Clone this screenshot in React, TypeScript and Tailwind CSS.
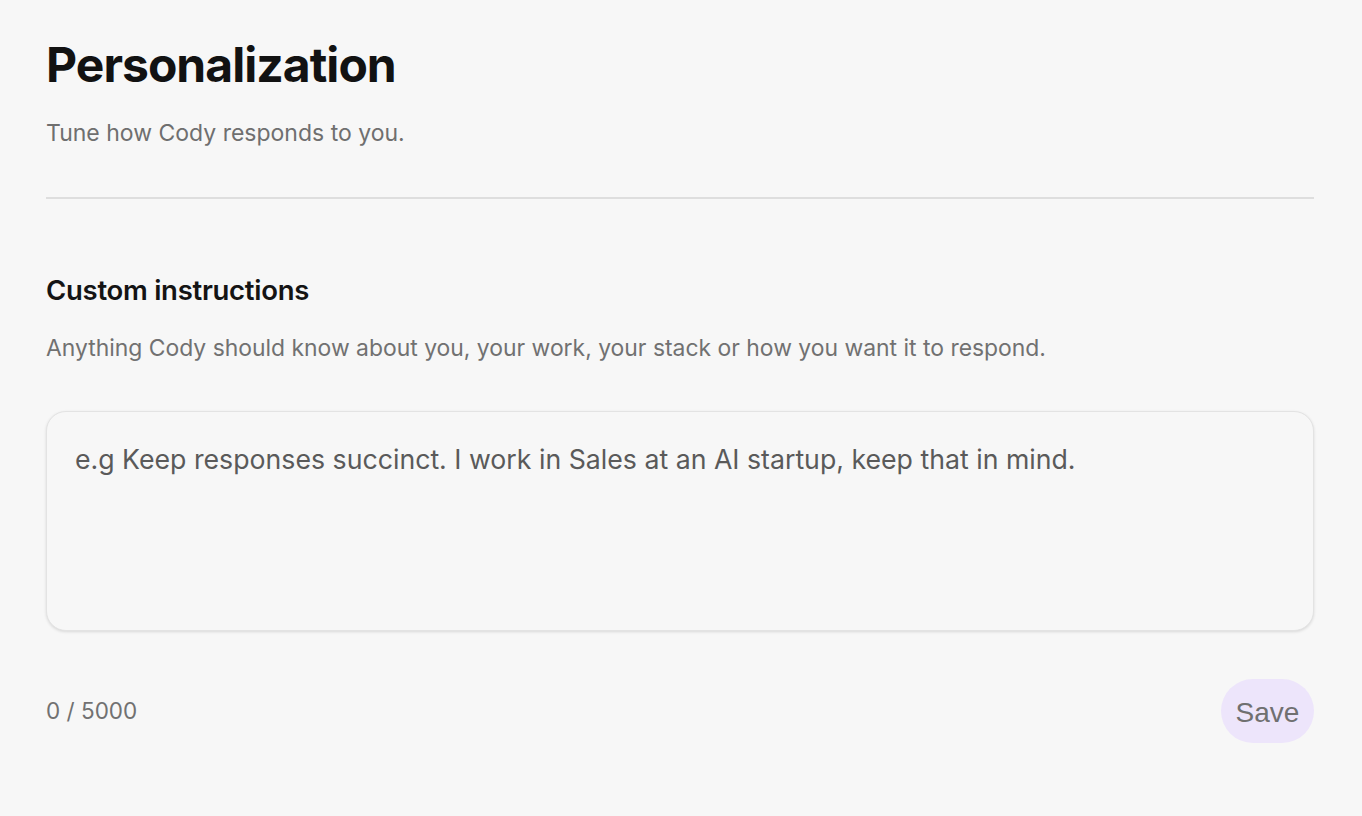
import React from "react";

export default function App() {
  return (
    <div
      className="min-h-[816px] w-full bg-[#f7f7f7] pl-[46px] pr-[48px] pt-[36px]"
      style={{ fontFamily: "Inter, 'Noto Sans', sans-serif" }}
    >
      <h1 className="text-[48px] font-bold leading-[58px] tracking-[-0.02em] text-[#121212]">
        Personalization
      </h1>
      <p className="mt-[24px] text-[23px] leading-[30px] text-[#6f6f6f]">
        Tune how Cody responds to you.
      </p>
      <div className="mt-[49px] h-[2px] w-full bg-[#dedede]" />
      <h2 className="mt-[74px] text-[27.5px] font-semibold leading-[34px] tracking-[-0.01em] text-[#141414]">
        Custom instructions
      </h2>
      <p className="mt-[26px] text-[22.9px] leading-[30px] text-[#717171]">
        Anything Cody should know about you, your work, your stack or how you want it to respond.
      </p>
      <div className="mt-[48px] h-[220px] w-full rounded-[20px] border border-[#e3e3e3] bg-[#f7f7f7] px-[28px] pt-[29px] shadow-[0_1px_3px_rgba(0,0,0,0.12)]">
        <textarea
          className="h-full w-full resize-none bg-transparent text-[26.7px] leading-[36px] text-[#555555] outline-none placeholder:text-[#5a5a5a]"
          placeholder="e.g Keep responses succinct. I work in Sales at an AI startup, keep that in mind."
          style={{ fontFamily: "Inter, 'Noto Sans', sans-serif" }}
        />
      </div>
      <div className="mt-[48px] flex items-center justify-between">
        <span className="text-[22.5px] text-[#717171]">0 / 5000</span>
        <button
          className="h-[64px] w-[93px] rounded-full bg-[#ede5fb] pt-[3px] text-[28px] text-[#707070]"
          style={{ fontFamily: "'Liberation Sans', Arial, sans-serif" }}
        >
          Save
        </button>
      </div>
    </div>
  );
}
